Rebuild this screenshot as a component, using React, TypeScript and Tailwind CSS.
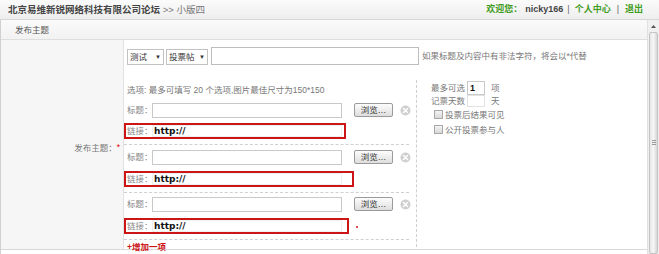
import React from "react";

function CloseIcon() {
  return (
    <svg width="11" height="11" viewBox="0 0 11 11" className="ml-[7px] shrink-0">
      <circle cx="5.5" cy="5.5" r="5" fill="#cfcfcf" />
      <path d="M3.5 3.5 L7.5 7.5 M7.5 3.5 L3.5 7.5" stroke="#fff" strokeWidth="1.6" strokeLinecap="round" />
    </svg>
  );
}

function TitleRow() {
  return (
    <div className="flex items-center h-[16px] pl-[3px]">
      <span className="w-[25px] shrink-0 whitespace-nowrap text-[#888]">标题：</span>
      <div className="w-[190px] h-[15px] border border-[#c9c9c9] bg-white shrink-0" />
      <div className="ml-[12px] w-[39px] h-[14px] border border-[#9a9a9a] rounded-[2px] bg-linear-to-b from-[#fdfdfd] to-[#dedede] flex items-center justify-center text-[#333] leading-none shrink-0 whitespace-nowrap">
        浏览…
      </div>
      <CloseIcon />
    </div>
  );
}

function LinkBox({ w }: { w: string }) {
  return (
    <div className={`${w} h-[16px] border-2 border-[#cc1515] flex items-center pl-[1px] bg-white shrink-0`}>
      <span className="w-[25px] shrink-0 whitespace-nowrap text-[#888]">链接：</span>
      <div className="w-[190px] h-[12px] shrink-0 border border-[#efefef] flex items-center pl-[1px] text-[#111] font-bold text-[9px] font-['DejaVu_Sans',sans-serif]">
        http://
      </div>
    </div>
  );
}

export default function App() {
  return (
    <div className="w-[659px] h-[254px] bg-white overflow-hidden text-[8.5px] leading-[12px] text-[#666] font-['Liberation_Sans','Noto_Sans_CJK_SC',sans-serif]">
      {/* top bar */}
      <div className="h-[20px] flex items-center justify-between pl-[8px] pr-[16px] bg-linear-to-b from-[#fbfbfb] to-[#eeeeee] border-b border-[#d6d6d6]">
        <div className="text-[9.5px] leading-none whitespace-nowrap">
          <span className="font-bold text-[#444]">北京易维新锐网络科技有限公司论坛</span>
          <span className="text-[#777]"> &gt;&gt; 小版四</span>
        </div>
        <div className="flex items-center text-[9px] leading-none font-bold whitespace-nowrap">
          <span className="text-[#3f9c1c]">欢迎您：</span>
          <span className="ml-[3px] text-[#444] font-['Liberation_Sans',sans-serif]">nicky166</span>
          <span className="ml-[4px] text-[#666] font-normal">|</span>
          <span className="ml-[5px] text-[#3f9c1c]">个人中心</span>
          <span className="ml-[6px] text-[#666] font-normal">|</span>
          <span className="ml-[6px] text-[#3f9c1c]">退出</span>
        </div>
      </div>

      <div className="flex h-[234px]">
        {/* content */}
        <div className="w-[648px] border-l border-[#d0d0d0] border-r border-r-[#e0e0e0]">
          <div className="h-[20px] flex items-center pl-[14px] bg-linear-to-b from-[#fafafa] to-[#f2f2f2] border-b border-[#dedede] text-[#555]">
            发布主题
          </div>
          <div className="flex h-[210px] border-b border-[#d8d8d8]">
            {/* label column */}
            <div className="w-[123px] bg-[#f6f6f6] border-r border-[#e2e2e2] flex items-center justify-end pr-[3px] pt-[7px] whitespace-nowrap">
              <span className="text-[#777]">发布主题：</span>
              <span className="text-[#d00] -mt-[2px]">*</span>
            </div>
            {/* right */}
            <div className="flex-1">
              {/* row 1 */}
              <div className="h-[36px] flex items-start pl-[3px] pt-[7px] whitespace-nowrap">
                <div className="mt-[2px] w-[37px] h-[16px] border border-[#c2c2c2] flex items-center justify-between px-[2px] text-[#333] bg-white">
                  <span>测试</span>
                  <span className="text-[6px]">▼</span>
                </div>
                <div className="mt-[2px] ml-[2px] w-[42px] h-[16px] border border-[#c2c2c2] flex items-center justify-between px-[2px] text-[#333] bg-white">
                  <span>投票帖</span>
                  <span className="text-[6px]">▼</span>
                </div>
                <div className="ml-[3px] w-[208px] h-[18px] border border-[#bdbdbd] bg-white" />
                <span className="ml-[3px] leading-[18px] text-[#777]">如果标题及内容中有非法字符，将会以*代替</span>
              </div>
              {/* poll area */}
              <div className="flex">
                <div className="w-[293px] mt-[4px] h-[167px] border-r border-dashed border-[#cfcfcf]">
                  <div className="pt-[3px] pl-[3px] leading-[14px] mb-[2px] text-[#777] whitespace-nowrap">
                    选项: 最多可填写 20 个选项,图片最佳尺寸为150*150
                  </div>
                  <div className="w-[285px] pt-[3px] pb-[5px] border-b border-dashed border-[#d0d0d0] flex flex-col gap-[5px]">
                    <TitleRow />
                    <LinkBox w="w-[222px]" />
                  </div>
                  <div className="w-[285px] pt-[4px] pb-[5px] border-b border-dashed border-[#d0d0d0] flex flex-col gap-[6px]">
                    <TitleRow />
                    <LinkBox w="w-[230px]" />
                  </div>
                  <div className="w-[285px] pt-[3px] pb-[5px] border-b border-dashed border-[#d0d0d0] flex flex-col gap-[6px]">
                    <TitleRow />
                    <div className="flex items-center">
                      <LinkBox w="w-[225px]" />
                      <span className="ml-[7px] mt-[2px] w-[2px] h-[2px] bg-[#cc1515] rounded-full" />
                    </div>
                  </div>
                  <div className="pl-[3px] pt-[1px] leading-[12px] text-[#cc1515] font-bold">+增加一项</div>
                </div>
                <div className="pl-[14px] pt-[4px] text-[#777] whitespace-nowrap">
                  <div className="h-[15px] flex items-center">
                    <span>最多可选</span>
                    <div className="ml-[2px] w-[18px] h-[14px] border border-[#c9c9c9] bg-white text-[#111] font-bold text-[9px] pl-[2px] leading-[12px] font-['Liberation_Sans',sans-serif]">1</div>
                    <span className="ml-[6px]">项</span>
                  </div>
                  <div className="h-[12px] flex items-center">
                    <span>记票天数</span>
                    <div className="ml-[2px] w-[18px] h-[12px] border border-[#e2e2e2] bg-white" />
                    <span className="ml-[6px]">天</span>
                  </div>
                  <div className="h-[15px] flex items-center pl-[3px]">
                    <span className="w-[9px] h-[9px] border border-[#a8a8a8] bg-linear-to-b from-[#f4f4f4] to-[#d8d8d8]" />
                    <span className="ml-[2px]">投票后结果可见</span>
                  </div>
                  <div className="h-[15px] flex items-center pl-[3px]">
                    <span className="w-[9px] h-[9px] border border-[#a8a8a8] bg-linear-to-b from-[#f4f4f4] to-[#d8d8d8]" />
                    <span className="ml-[2px]">公开投票参与人</span>
                  </div>
                </div>
              </div>
            </div>
          </div>
        </div>
        {/* scrollbar */}
        <div className="w-[11px] bg-[#f0f0f0] flex flex-col">
          <div className="h-[12px] flex items-center justify-center">
            <svg width="5" height="3" viewBox="0 0 5 3"><path d="M0 3 L2.5 0 L5 3 Z" fill="#555" /></svg>
          </div>
          <div className="flex-1 mx-[1px] border border-[#c4c4c4] rounded-[2px] bg-linear-to-r from-[#e6e6e6] via-[#f6f6f6] to-[#d6d6d6] flex items-center justify-center">
            <div className="flex flex-col gap-[1px] -mt-[1px]">
              <div className="w-[4px] h-[1px] bg-[#999]" />
              <div className="w-[4px] h-[1px] bg-[#999]" />
              <div className="w-[4px] h-[1px] bg-[#999]" />
            </div>
          </div>
        </div>
      </div>
    </div>
  );
}
